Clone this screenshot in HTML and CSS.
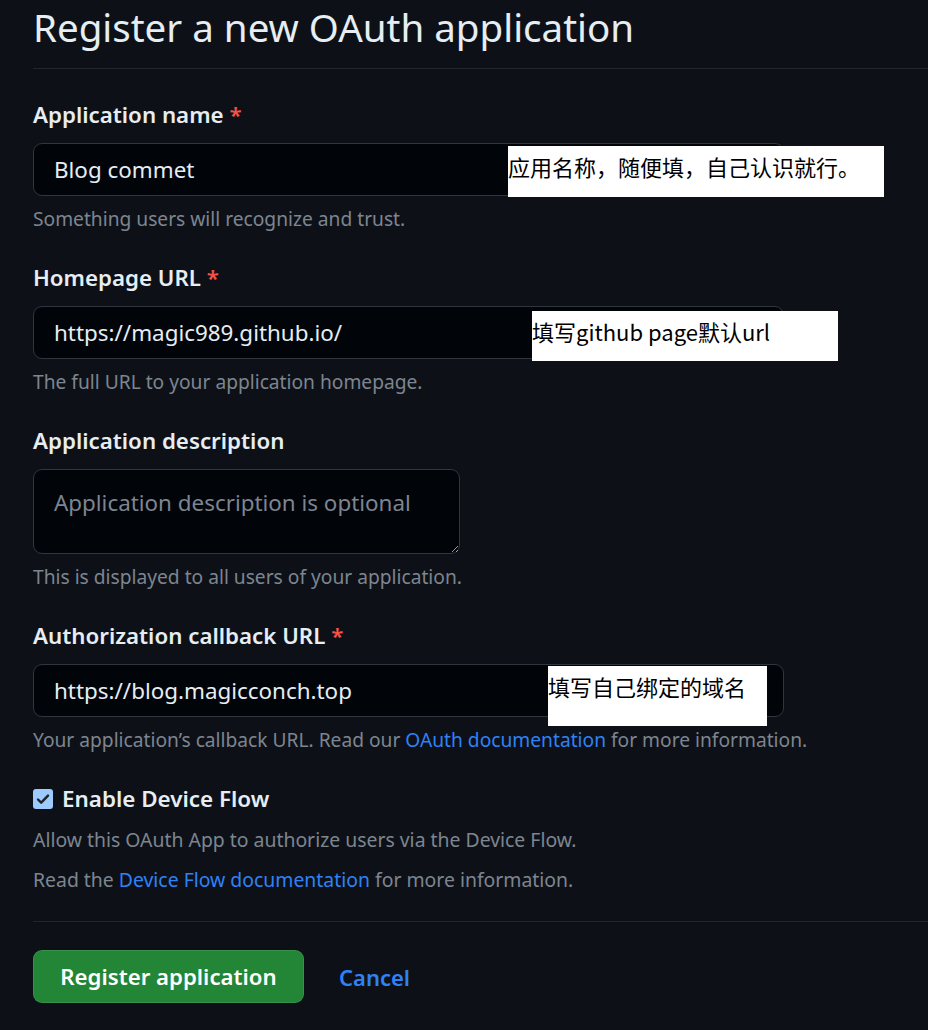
FILE: index.html
```html
<!DOCTYPE html>
<html lang="en">
<head>
<meta charset="utf-8">
<title>Register a new OAuth application</title>
<link rel="stylesheet" href="styles.css">
</head>
<body>
<main class="page">
  <h1 class="title">Register a new OAuth application</h1>
  <form class="form">
    <div class="group">
      <label class="label">Application name <span class="req">*</span></label>
      <div class="field">
        <input class="input" type="text" value="Blog commet">
        <div class="note-box note-box-1">应用名称，随便填，自己认识就行。</div>
      </div>
      <p class="note">Something users will recognize and trust.</p>
    </div>
    <div class="group">
      <label class="label">Homepage URL <span class="req">*</span></label>
      <div class="field">
        <input class="input" type="text" value="https://magic989.github.io/">
        <div class="note-box note-box-2">填写github page默认url</div>
      </div>
      <p class="note">The full URL to your application homepage.</p>
    </div>
    <div class="group">
      <label class="label">Application description</label>
      <div class="field">
        <textarea class="textarea" placeholder="Application description is optional"></textarea>
      </div>
      <p class="note">This is displayed to all users of your application.</p>
    </div>
    <div class="group group-last">
      <label class="label">Authorization callback URL <span class="req">*</span></label>
      <div class="field">
        <input class="input" type="text" value="https://blog.magicconch.top">
        <div class="note-box note-box-3">填写自己绑定的域名</div>
      </div>
      <p class="note">Your application’s callback URL. Read our <a class="link" href="#">OAuth documentation</a> for more information.</p>
    </div>
    <div class="check-group">
      <label class="check-label">
        <span class="checkbox"><svg viewBox="0 0 20 20" width="20" height="20"><path d="M5 10.5l3.2 3.2L15 6.6" fill="none" stroke="#1f2328" stroke-width="2.4" stroke-linecap="round" stroke-linejoin="round"/></svg></span>
        Enable Device Flow
      </label>
      <p class="check-note">Allow this OAuth App to authorize users via the Device Flow.</p>
      <p class="check-note check-note-2">Read the <a class="link" href="#">Device Flow documentation</a> for more information.</p>
    </div>
    <div class="actions">
      <button class="btn-primary" type="button">Register application</button>
      <a class="cancel" href="#">Cancel</a>
    </div>
  </form>
</main>
</body>
</html>
```

FILE: styles.css
```css
html, body {
  margin: 0;
  padding: 0;
  background: #0d1117;
}
body {
  color: #e6edf3;
  font-family: "Segoe UI", "Noto Sans", "Noto Sans CJK SC", sans-serif;
  overflow: hidden;
}
.page {
  padding-left: 33px;
}
.title {
  margin: 0;
  padding: 0 0 13px;
  font-size: 38.5px;
  font-weight: 400;
  line-height: 55px;
  border-bottom: 1px solid #21262d;
}
.form {
  padding-top: 31px;
}
.group {
  margin-bottom: 31px;
}
.group-last {
  margin-bottom: 24px;
}
.label {
  display: block;
  font-size: 22.3px;
  font-weight: 600;
  line-height: 30px;
  margin-bottom: 13px;
}
.req {
  color: #f85149;
}
.field {
  position: relative;
  width: 751px;
}
.input {
  display: block;
  box-sizing: border-box;
  width: 751px;
  height: 53px;
  padding: 0 20px;
  background: #010409;
  border: 1px solid #30363d;
  border-radius: 9px;
  color: #e6edf3;
  font-family: inherit;
  font-size: 22.4px;
  outline: none;
}
.textarea {
  display: block;
  box-sizing: border-box;
  width: 427px;
  height: 85px;
  padding: 17px 20px;
  background: #010409;
  border: 1px solid #30363d;
  border-radius: 9px;
  color: #e6edf3;
  font-family: inherit;
  font-size: 22.4px;
  line-height: 1.4;
  color-scheme: dark;
  outline: none;
}
.textarea::placeholder {
  color: #7d8590;
}
.note {
  margin: 10px 0 0;
  font-size: 19.2px;
  line-height: 26px;
  color: #7d8590;
}
.link {
  color: #2f81f7;
  text-decoration: none;
}
.note-box {
  position: absolute;
  background: #ffffff;
  color: #000000;
  font-family: "Microsoft YaHei", "Noto Sans CJK SC", sans-serif;
  font-size: 22px;
  line-height: 30px;
  white-space: nowrap;
  box-sizing: border-box;
}
.note-box-1 {
  left: 475px;
  top: 3px;
  width: 376px;
  height: 51px;
  padding-top: 5px;
}
.note-box-2 {
  left: 499px;
  top: 5px;
  width: 306px;
  height: 50px;
  padding-top: 5px;
}
.note-box-3 {
  left: 515px;
  top: 2px;
  width: 219px;
  height: 60px;
  padding-top: 5px;
}
.check-group {
  padding-top: 7px;
  padding-bottom: 28px;
  border-bottom: 1px solid #21262d;
}
.check-label {
  display: flex;
  align-items: center;
  gap: 9px;
  font-size: 22.4px;
  font-weight: 600;
  line-height: 30px;
}
.checkbox {
  display: inline-flex;
  width: 20px;
  height: 20px;
  border-radius: 3px;
  background: #9ecbff;
}
.check-note {
  margin: 12px 0 0;
  font-size: 19.4px;
  line-height: 27px;
  color: #7d8590;
}
.check-note-2 {
  margin-top: 13px;
}
.actions {
  display: flex;
  align-items: center;
  gap: 35px;
  padding-top: 28px;
}
.btn-primary {
  box-sizing: border-box;
  width: 271px;
  height: 53px;
  background: #238636;
  border: 1px solid rgba(240, 246, 252, 0.1);
  border-radius: 9px;
  color: #ffffff;
  font-family: inherit;
  font-size: 22.2px;
  font-weight: 600;
}
.cancel {
  color: #2f81f7;
  font-size: 22px;
  font-weight: 600;
  text-decoration: none;
}
```
